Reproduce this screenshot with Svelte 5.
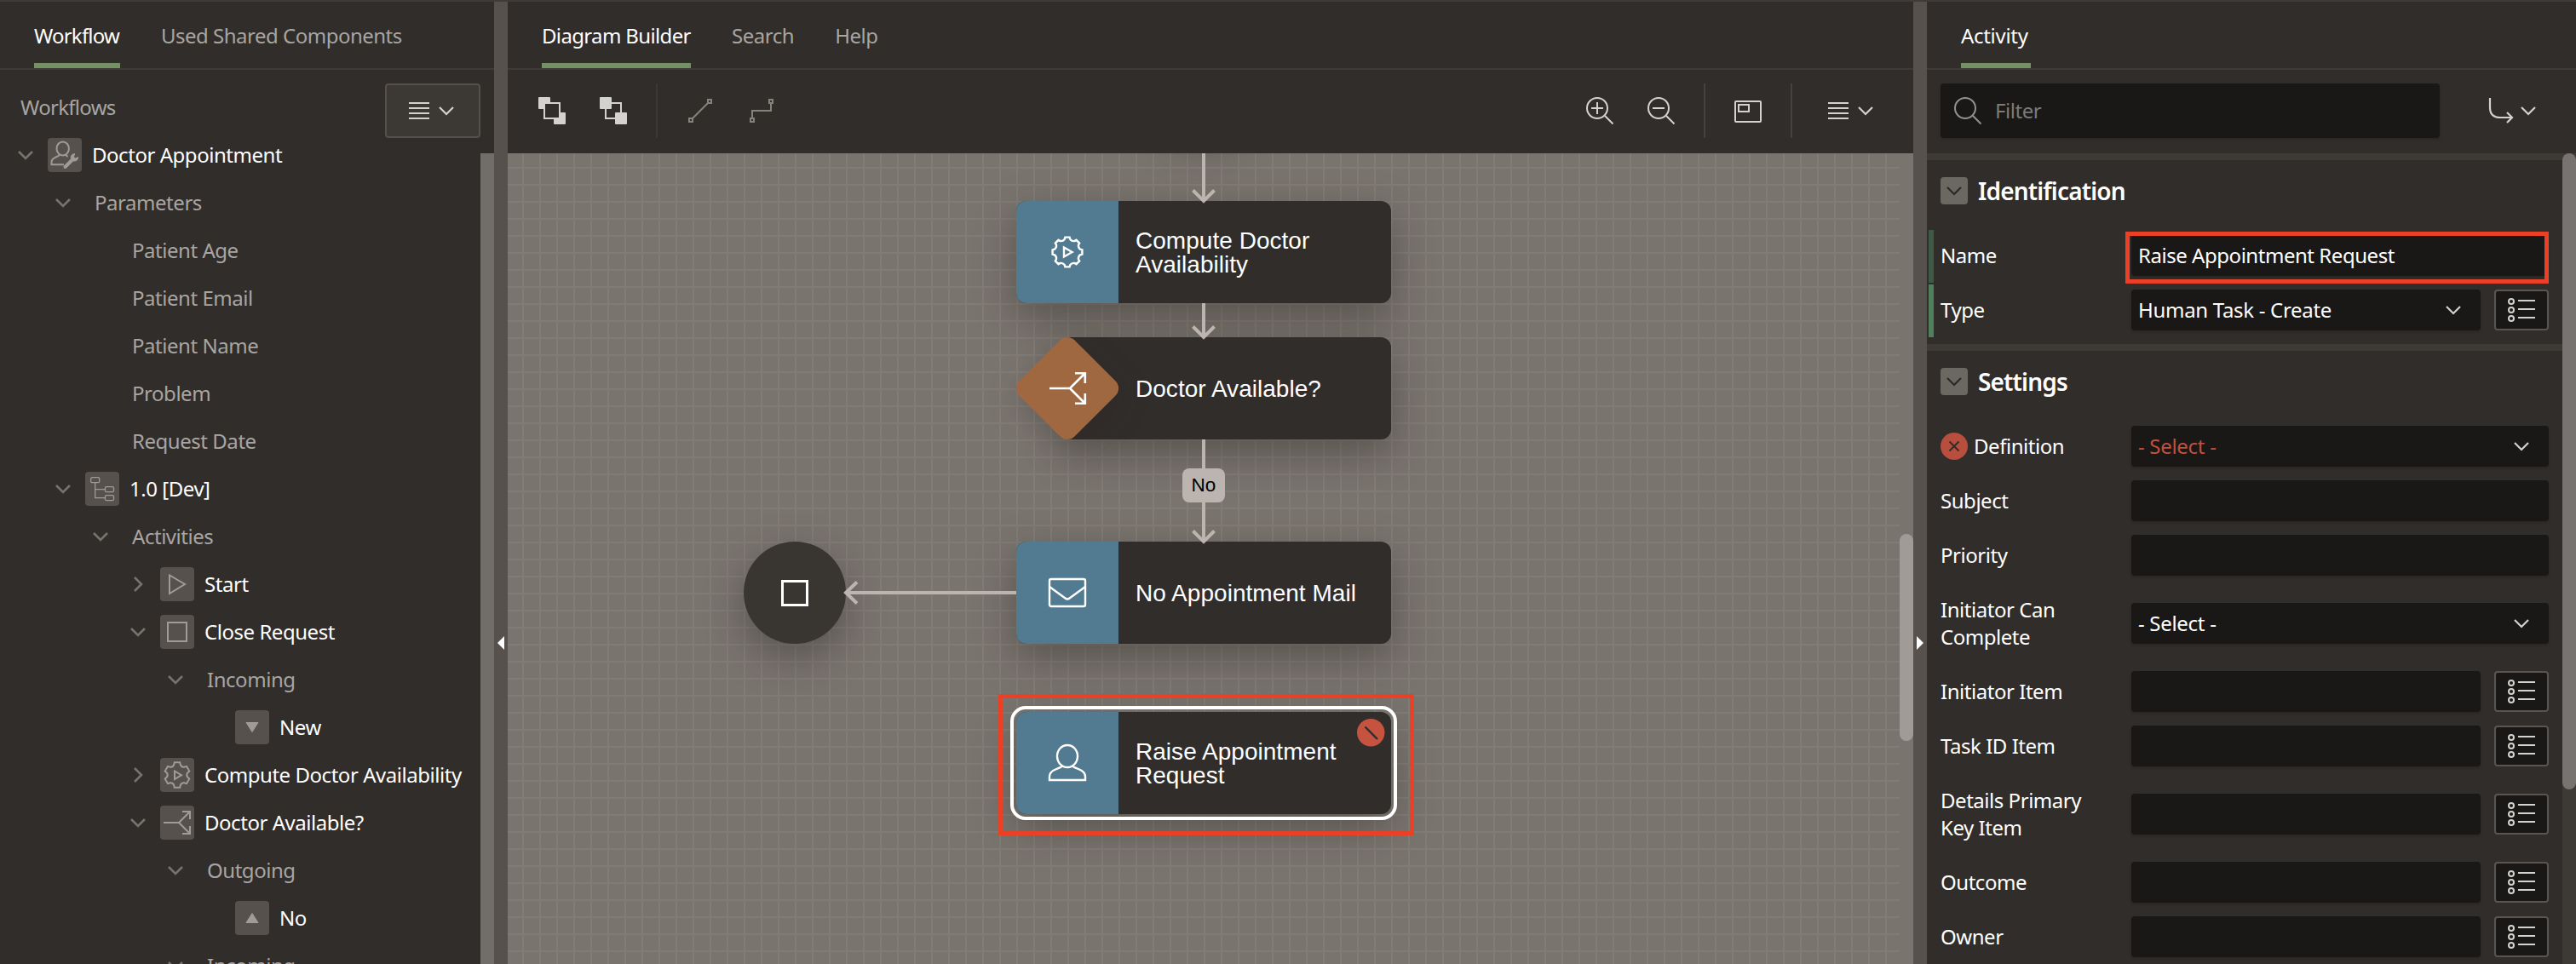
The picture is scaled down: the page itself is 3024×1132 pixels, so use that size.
<script>
  const tree = [
    { level: 0, open: true, icon: 'userWrench', label: 'Doctor Appointment' },
    { level: 1, open: true, label: 'Parameters' },
    { level: 2, label: 'Patient Age' },
    { level: 2, label: 'Patient Email' },
    { level: 2, label: 'Patient Name' },
    { level: 2, label: 'Problem' },
    { level: 2, label: 'Request Date' },
    { level: 1, open: true, icon: 'hierarchy', label: '1.0 [Dev]' },
    { level: 2, open: true, label: 'Activities' },
    { level: 3, open: false, icon: 'play', label: 'Start' },
    { level: 3, open: true, icon: 'stop', label: 'Close Request' },
    { level: 4, open: true, label: 'Incoming' },
    { level: 5, icon: 'down', label: 'New' },
    { level: 3, open: false, icon: 'gear', label: 'Compute Doctor Availability' },
    { level: 3, open: true, icon: 'fork', label: 'Doctor Available?' },
    { level: 4, open: true, label: 'Outgoing' },
    { level: 5, icon: 'up', label: 'No' },
    { level: 4, open: true, label: 'Incoming' }
  ];

  const settings = [
    { label: 'Definition', value: '- Select -', select: true, error: true },
    { label: 'Subject' },
    { label: 'Priority' },
    { label: 'Initiator Can Complete', value: '- Select -', select: true, tall: true },
    { label: 'Initiator Item', list: true },
    { label: 'Task ID Item', list: true },
    { label: 'Details Primary Key Item', list: true, tall: true },
    { label: 'Outcome', list: true },
    { label: 'Owner', list: true }
  ];

  // Gear outline: flat-topped teeth joined by rounded valleys.
  function gear(cx, cy, teeth, outer, inner, half) {
    const step = (Math.PI * 2) / teeth;
    const at = (r, a) => `${(cx + r * Math.sin(a)).toFixed(2)} ${(cy - r * Math.cos(a)).toFixed(2)}`;
    let d = '';
    for (let i = 0; i < teeth; i++) {
      const a = i * step;
      const mid = inner + (outer - inner) * 0.35;
      d += `${i ? 'L' : 'M'}${at(outer, a - half)}L${at(outer, a + half)}L${at(mid, a + half * 1.45)}`;
      d += `Q${at(inner - 0.6, a + step / 2)} ${at(mid, a + step - half * 1.45)}`;
    }
    return d + 'Z';
  }
  const gear8 = gear(24, 24, 8, 17.6, 14.2, 0.15);
  const gear6 = gear(20, 20, 6, 15, 11, 0.22);
</script>

{#snippet chevron(cls)}
  <svg class="chev {cls}" viewBox="0 0 18 10"><path d="M1 1l8 8 8-8" /></svg>
{/snippet}

{#snippet burger()}
  <svg class="burger" viewBox="0 0 24 20"><path d="M0 1h24M0 7h24M0 13h24M0 19h24" /></svg>
{/snippet}

{#snippet listButton()}
  <button class="list-btn" aria-label="List">
    <svg viewBox="0 0 34 30">
      <path d="M13 4h20M13 14h20M13 24h20" />
      <circle cx="5" cy="5" r="3" /><circle cx="5" cy="15" r="3" /><circle cx="5" cy="25" r="3" />
    </svg>
  </button>
{/snippet}

{#snippet treeIcon(name)}
  <svg class="tree-icon" viewBox="0 0 40 40">
    {#if name === 'userWrench'}
      <ellipse cx="17.7" cy="12.4" rx="7.2" ry="8" />
      <path d="M14 19.5c-1 2-3 2.400-5 3.300Q4.500 25 4.500 28v3.300h14.500M21.300 19.500c.4 1.300 1.200 2 2.400 2.400" />
      <path class="thick" d="M20.500 34l8.500-8.500" />
      <path class="wr" d="M31.800 18.600q-5 .4-4.600 5.600q1 3.200 4.300 2.900q4-.2 4.200-4.500l-3.300 1.500-2-2z" />
    {:else if name === 'hierarchy'}
      <g class="thin">
        <rect x="6.700" y="6.700" width="10" height="6" rx="1.500" />
        <rect x="23.500" y="17.700" width="10" height="6" rx="1.500" />
        <rect x="23.500" y="27.700" width="10" height="6" rx="1.500" />
        <path d="M11.700 13v17.700h11.800M11.700 20.700h11.800" />
      </g>
    {:else if name === 'play'}
      <path d="M11 9.500v21.500L29 20z" />
    {:else if name === 'stop'}
      <rect x="9" y="9" width="22" height="22" />
    {:else if name === 'down'}
      <path class="solid" d="M13 14.500h14L20 25.500z" />
    {:else if name === 'up'}
      <path class="solid" d="M13 25.500h14L20 14.500z" />
    {:else if name === 'gear'}
      <path d={gear6} /><path d="M17 15.500v9.500l8-4.800z" />
    {:else if name === 'fork'}
      <path d="M4 20h18L35 7M22 20l13 13M26 7h9v9M26 33h9v-9" />
    {/if}
  </svg>
{/snippet}

<div class="app">
  <aside class="left">
    <nav class="tabs">
      <span class="tab active">Workflow</span>
      <span class="tab">Used Shared Components</span>
    </nav>
    <div class="left-body">
      <div class="left-main">
        <header class="tree-head">
          <span>Workflows</span>
          <button class="menu-btn" aria-label="Menu">{@render burger()}{@render chevron('light')}</button>
        </header>
        <ul class="tree">
          {#each tree as item}
            <li class="node-row" class:item={item.icon} style="padding-left:{12 + item.level * 44}px">
              <span class="toggle">
                {#if item.open !== undefined}
                  <svg class="chev dim" class:closed={!item.open} viewBox="0 0 18 10"><path d="M1 1l8 8 8-8" /></svg>
                {/if}
              </span>
              {#if item.icon}{@render treeIcon(item.icon)}{/if}
              <span class="row-label">{item.label}</span>
            </li>
          {/each}
        </ul>
      </div>
      <div class="left-scroll"></div>
    </div>
  </aside>

  <div class="splitter first"><svg viewBox="0 0 8 16"><path d="M8 0v16L0 8z" /></svg></div>

  <main class="center">
    <nav class="tabs">
      <span class="tab active">Diagram Builder</span>
      <span class="tab">Search</span>
      <span class="tab">Help</span>
    </nav>
    <div class="toolbar">
      <svg class="tool" viewBox="0 0 32 32">
        <rect class="fill" width="14" height="14" rx="1" /><rect class="fill" x="18" y="18" width="14" height="14" rx="1" />
        <rect class="hollow" x="7" y="7" width="18" height="18" />
      </svg>
      <svg class="tool" viewBox="0 0 32 32">
        <rect class="hollow" x="7" y="7" width="18" height="18" />
        <rect class="fill" width="14" height="14" rx="1" /><rect class="fill" x="18" y="18" width="14" height="14" rx="1" />
      </svg>
      <i class="sep faint"></i>
      <svg class="tool small faded" viewBox="0 0 28 28">
        <path d="M5 23L23 5" /><rect x="1" y="23" width="4" height="4" /><rect x="23" y="1" width="4" height="4" />
      </svg>
      <svg class="tool small faded" viewBox="0 0 28 28">
        <path d="M3 22v-8h22V6" /><rect x="1" y="23" width="4" height="4" /><rect x="23" y="1" width="4" height="4" />
      </svg>
      <span class="grow"></span>
      <svg class="tool" viewBox="0 0 32 32"><circle cx="13" cy="13" r="12" /><path d="M22 22l9.500 9.500M6 13h14M13 6v14" /></svg>
      <svg class="tool" viewBox="0 0 32 32"><circle cx="13" cy="13" r="12" /><path d="M22 22l9.500 9.500M6 13h14" /></svg>
      <i class="sep"></i>
      <svg class="tool" viewBox="0 0 32 32"><rect x="1" y="5" width="30" height="24" rx="1" /><rect x="5" y="9" width="12" height="8" /></svg>
      <i class="sep"></i>
      <div class="tool-menu">{@render burger()}{@render chevron('light')}</div>
    </div>

    <div class="canvas">
      <div class="grid"></div>
      <div class="circle start"></div>
      <div class="circle end"><i></i></div>

      <div class="task compute">
        <span class="badge-icon"><svg viewBox="0 0 48 48"><path d={gear8} /><path d="M20 18.500v11l9.600-5.500z" /></svg></span>
        <span class="task-label">Compute Doctor Availability</span>
      </div>
      <div class="task decision">
        <svg class="diamond" viewBox="0 0 120 120">
          <rect x="14" y="14" width="92" height="92" rx="12" transform="rotate(45 60 60)" />
          <path d="M39 60h24L80.500 42.500M63 60l17.500 17.500M69 42.200h11.800V54M69 77.800h11.800V66" />
        </svg>
        <span class="task-label">Doctor Available?</span>
      </div>
      <div class="task mail">
        <span class="badge-icon">
          <svg viewBox="0 0 48 48"><rect x="3" y="8" width="42" height="32" rx="2" /><path d="M3 17l18.500 13.500q2.500 2 5 0L45 17" /></svg>
        </span>
        <span class="task-label">No Appointment Mail</span>
      </div>
      <div class="task raise">
        <span class="badge-icon">
          <svg viewBox="0 0 48 48">
            <ellipse cx="24" cy="16" rx="12" ry="13" />
            <path d="M18 27.600q-1 1-3 1.800L9 32Q3 34.800 3 40v4h42v-4q0-5.200-6-8l-6-2.600q-2-.8-3-1.800" />
          </svg>
        </span>
        <span class="task-label">Raise Appointment Request</span>
        <svg class="error-mark" viewBox="0 0 32 32"><circle cx="16" cy="16" r="16" /><path d="M10 10l13 13" /></svg>
      </div>

      <svg class="links" viewBox="0 0 1650 952">
        <path d="M817 0v54M817 176v38M817 336v118M597 516H399" />
        <path d="M804.500 43.500L817 56l12.500-12.500M804.500 203.500L817 216l12.500-12.500M804.500 443.500L817 456l12.500-12.500M410 503.500L397 516l13 12.500" />
      </svg>
      <span class="link-label">No</span>
      <div class="marker"></div>
      <div class="canvas-scroll"></div>
    </div>
  </main>

  <div class="splitter second"><svg viewBox="0 0 8 16"><path d="M0 0v16l8-8z" /></svg></div>

  <aside class="right">
    <nav class="tabs"><span class="tab active">Activity</span></nav>
    <div class="filter-bar">
      <div class="filter">
        <svg viewBox="0 0 32 32"><circle cx="13" cy="13" r="12" /><path d="M22 22l9.500 9.500" /></svg>
        <span>Filter</span>
      </div>
      <div class="goto">
        <svg viewBox="0 0 28 30"><path d="M1 0v11q0 12 12 12h14M21 17l6 6-6 6" /></svg>
        {@render chevron('light')}
      </div>
    </div>
    <div class="props-wrap">
      <div class="props">
        <section>
          <h2><span class="fold">{@render chevron('dark')}</span>Identification</h2>
          <div class="prop changed soft">
            <span class="name">Name</span>
            <div class="field highlighted">Raise Appointment Request</div>
          </div>
          <div class="prop changed">
            <span class="name">Type</span>
            <div class="field choice">Human Task - Create{@render chevron('light')}</div>
            {@render listButton()}
          </div>
        </section>
        <section>
          <h2><span class="fold">{@render chevron('dark')}</span>Settings</h2>
          {#each settings as p}
            <div class="prop" class:tall={p.tall}>
              <span class="name" class:has-error={p.error}>
                {#if p.error}
                  <svg class="error-dot" viewBox="0 0 32 32"><circle cx="16" cy="16" r="16" /><path d="M10.500 10.500l11 11M21.500 10.500l-11 11" /></svg>
                {/if}
                {p.label}
              </span>
              <div class="field" class:invalid={p.error} class:choice={p.select}>
                {p.value ?? ''}{#if p.select}{@render chevron('light')}{/if}
              </div>
              {#if p.list}{@render listButton()}{/if}
            </div>
          {/each}
        </section>
      </div>
      <div class="props-scroll"><i></i></div>
    </div>
  </aside>
</div>

<style>
  :global(body) { margin: 0; background: #312d2a; overflow: hidden; }
  .app {
    display: flex; height: 1132px; width: 3024px; overflow: hidden; box-sizing: border-box;
    border-top: 2px solid #3f3b37; background: #312d2a; color: #fff;
    font: 24px/32px "Noto Sans", sans-serif; letter-spacing: -0.46px;
  }
  svg { display: block; flex: none; fill: none; overflow: visible; }
  button { font: inherit; color: inherit; padding: 0; box-sizing: border-box; }

  .tabs { display: flex; height: 78px; border-bottom: 2px solid #3f3b37; color: #a8a5a2; flex: none; }
  .tab { display: flex; align-items: center; height: 78px; padding-top: 2px; box-sizing: border-box; white-space: nowrap; }
  .tab.active { color: #fff; box-shadow: inset 0 -6px #759065; }

  .chev { width: 18px; height: 10px; stroke: #d4d2cf; stroke-width: 2.2; }
  .chev.dim { stroke: #77736e; stroke-width: 2.6; }
  .chev.dark { stroke: #2b2825; }
  .chev.closed { transform: rotate(-90deg); }
  .burger { width: 24px; height: 20px; stroke: #d4d2cf; stroke-width: 2; }

  .left { width: 580px; display: flex; flex-direction: column; flex: none; }
  .left .tabs { padding-left: 40px; gap: 48px; }
  .left .tab.active { width: 101px; letter-spacing: -0.8px; }
  .left .tab { letter-spacing: -0.5px; }
  .left-body { display: flex; flex: 1; min-height: 0; }
  .left-main { width: 564px; overflow: hidden; }
  .left-scroll { width: 16px; margin-top: 98px; background: #716d69; }
  .tree-head { display: flex; justify-content: space-between; height: 72px; padding-left: 24px; box-sizing: border-box; color: #a8a5a2; }
  .tree-head span { margin-top: 28px; letter-spacing: -0.7px; }
  .menu-btn { display: flex; align-items: center; gap: 11px; width: 112px; height: 64px; margin-top: 16px; padding-left: 26px; border: 2px solid #55504c; border-radius: 4px; background: #3c3935; }
  .tree { list-style: none; margin: 0; padding: 0; }
  .node-row { display: flex; align-items: center; height: 56px; color: #a8a5a2; white-space: nowrap; }
  .node-row.item { color: #fff; }
  .toggle { display: flex; justify-content: center; width: 36px; flex: none; }
  .row-label { margin-left: 19px; }
  .item .row-label { margin-left: 12px; }
  .tree-icon { width: 40px; height: 40px; margin-left: 8px; border-radius: 4px; background: #56514d; stroke: #9f9b97; stroke-width: 2; }
  .tree-icon .thick { stroke-width: 4; stroke-linecap: round; }
  .tree-icon .wr, .tree-icon .solid { fill: #9f9b97; stroke-width: 1; stroke-linejoin: round; }
  .tree-icon .thin { stroke-width: 1.3; }

  .splitter { display: flex; align-items: center; justify-content: center; width: 16px; flex: none; background: #57514d; }
  .splitter svg { width: 8px; height: 16px; fill: #fff; margin-top: 376px; }

  .center { width: 1650px; display: flex; flex-direction: column; flex: none; }
  .center .tabs { padding-left: 40px; gap: 48px; }
  .center .tab.active { width: 175px; letter-spacing: -0.65px; }
  .toolbar { display: flex; align-items: center; height: 98px; padding: 0 47px 2px 36px; box-sizing: border-box; gap: 40px; flex: none; }
  .tool { width: 32px; height: 32px; stroke: #d4d2cf; stroke-width: 2; }
  .tool .fill { fill: #d4d2cf; stroke: none; }
  .tool .hollow { fill: #312d2a; }
  .tool.small { width: 28px; height: 28px; }
  .tool.faded { stroke: #85817b; }
  .tool.faded + .tool.faded { margin-left: 4px; }
  .sep { width: 2px; height: 64px; margin: 0 -6px; background: #47423f; }
  .sep.faint { margin-right: -4px; background: #3b3733; }
  .grow { flex: 1; margin-right: -40px; }
  .tool-menu { display: flex; align-items: center; gap: 11px; margin-left: 8px; }

  .canvas { position: relative; flex: 1; overflow: hidden; background: #7a746f; }
  .grid {
    position: absolute; inset: 0 16px 0 0;
    background:
      linear-gradient(90deg, #827c76 2px, transparent 2px) 17px 0 / 20px 20px,
      linear-gradient(#827c76 2px, transparent 2px) 0 16px / 20px 20px;
  }
  .circle { position: absolute; width: 120px; height: 120px; border-radius: 50%; background: #393631; box-shadow: 0 16px 48px rgba(35, 32, 28, 0.4); }
  .circle.start { left: 757px; top: -144px; }
  .circle.end { left: 277px; top: 456px; display: grid; place-items: center; }
  .circle i { width: 26px; height: 25px; border: 3px solid #fff; }
  .task {
    position: absolute; left: 597px; display: flex; align-items: center; width: 440px; height: 120px;
    border-radius: 12px; background: #312d2a; box-shadow: 0 16px 48px rgba(35, 32, 28, 0.4);
    font: 28px/28px "Liberation Sans", sans-serif; letter-spacing: 0.03px;
  }
  .compute { top: 56px; }
  .decision { top: 216px; left: 657px; width: 380px; border-radius: 0 12px 12px 0; }
  .mail { top: 456px; }
  .raise { top: 656px; }
  .raise::after { content: ''; position: absolute; inset: -7px; border: 4px solid #fff; border-radius: 18px; }
  .badge-icon { display: grid; place-items: center; width: 120px; height: 120px; flex: none; border-radius: 12px 0 0 12px; background: #527b91; }
  .badge-icon svg { width: 48px; height: 48px; stroke: #fff; stroke-width: 2.4; }
  .diamond { width: 120px; height: 120px; margin-left: -60px; filter: drop-shadow(0 12px 18px rgba(35, 32, 28, 0.2)); }
  .diamond rect { fill: #a06841; }
  .diamond path { stroke: #fff; stroke-width: 2.6; }
  .task-label { width: 270px; margin-left: 20px; padding-top: 1px; }
  .error-mark { position: absolute; left: 399.500px; top: 7.500px; width: 32.500px; height: 32.500px; fill: #c55340; }
  .error-mark path { stroke: #312d2a; stroke-width: 2.2; stroke-linecap: round; }
  .links { position: absolute; left: 0; top: 0; width: 1650px; height: 952px; stroke: #bbb4af; stroke-width: 4; }
  .link-label {
    position: absolute; left: 792px; top: 370px; width: 50px; height: 40px; border-radius: 8px; background: #bbb4af;
    color: #000; font: 22.500px/40px "Liberation Sans", sans-serif; text-align: center; letter-spacing: 0;
  }
  .marker { position: absolute; left: 576px; top: 635px; width: 478px; height: 156px; border: 5px solid #ea4025; }
  .canvas-scroll { position: absolute; right: 0; top: 447px; width: 16px; height: 243px; border-radius: 8px; background: #a09b97; }

  .right { width: 762px; display: flex; flex-direction: column; flex: none; }
  .right .tabs { padding-left: 40px; }
  .right .tab.active { width: 82px; letter-spacing: -0.3px; }
  .filter-bar { display: flex; align-items: center; height: 98px; padding: 0 47px 2px 16px; box-sizing: border-box; justify-content: space-between; flex: none; }
  .filter { display: flex; align-items: center; gap: 16px; width: 570px; height: 64px; padding-left: 16px; border-radius: 4px; background: #191816; color: #7d7a77; box-shadow: 0 2px 3px rgba(0, 0, 0, 0.15); }
  .filter svg { width: 32px; height: 32px; stroke: #94918e; stroke-width: 2; }
  .goto { display: flex; align-items: center; gap: 9px; }
  .goto > svg:first-child { width: 28px; height: 30px; stroke: #d4d2cf; stroke-width: 2.2; }
  .props-wrap { display: flex; flex: 1; min-height: 0; }
  .props { width: 746px; overflow: hidden; }
  .props-scroll { width: 16px; background: #3d3a35; }
  .props-scroll i { display: block; height: 747px; border-radius: 8px; background: #787370; }
  section { border-top: 8px solid #3e3a36; padding-bottom: 8px; }
  h2 { display: flex; align-items: center; gap: 12px; height: 72px; margin: 0 0 8px; padding-left: 16px; font-size: 28px; font-weight: 600; letter-spacing: -0.85px; }
  .fold { display: grid; place-items: center; width: 32px; height: 32px; border-radius: 4px; background: #6b6862; }
  .prop { position: relative; display: flex; align-items: center; height: 64px; padding: 0 16px; }
  .prop.tall { height: 96px; }
  .prop.changed::before { content: ''; position: absolute; left: 2px; top: 2px; width: 6px; height: 62px; background: #4f7f5c; }
  .prop.soft::before { background: #3e5944; }
  .name { width: 190px; margin-right: 34px; flex: none; }
  .name.has-error { display: flex; align-items: center; gap: 7px; }
  .error-dot { width: 32px; height: 32px; fill: #b84f3e; }
  .error-dot path { stroke: #312d2a; stroke-width: 2; }
  .field {
    position: relative; display: flex; align-items: center; justify-content: space-between; flex: 1; height: 48px; padding: 0 23px 0 8px;
    border-radius: 4px; background: #191816; box-shadow: 0 2px 3px rgba(0, 0, 0, 0.15);
  }
  .field.choice { letter-spacing: -0.3px; }
  .field.highlighted::after { content: ''; position: absolute; inset: -4px 0 -9px -7px; border: 5px solid #ea4025; }
  .field.invalid { color: #c0503e; }
  .list-btn { display: grid; place-items: center; width: 64px; height: 48px; margin-left: 16px; flex: none; border: 2px solid #5a5551; border-radius: 4px; background: #191816; }
  .list-btn svg { width: 34px; height: 30px; stroke: #d4d2cf; stroke-width: 2; }
</style>
